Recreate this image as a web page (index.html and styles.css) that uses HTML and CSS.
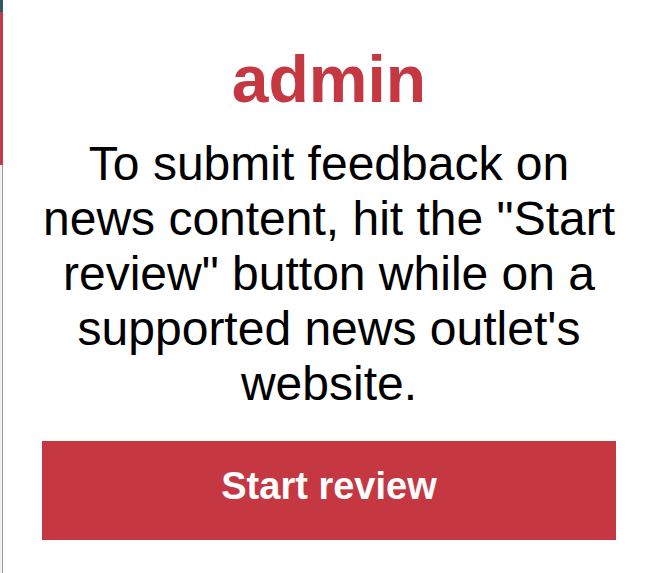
FILE: index.html
```html
<!DOCTYPE html>
<html lang="en">
<head>
<meta charset="utf-8">
<title>admin</title>
<link rel="stylesheet" href="styles.css">
</head>
<body>
<div class="edge">
  <div class="edge-top"></div>
  <div class="edge-red"></div>
  <div class="edge-rest"></div>
</div>
<main class="panel">
  <h1 class="title">admin</h1>
  <p class="message">To submit feedback on news content, hit the "Start review" button while on a supported news outlet's website.</p>
  <button class="start" type="button">Start review</button>
</main>
</body>
</html>
```

FILE: styles.css
```css
html, body {
  margin: 0;
  padding: 0;
  background: #ffffff;
}
body {
  display: flex;
  min-height: 573px;
  font-family: "Liberation Sans", Arial, Helvetica, sans-serif;
}
.edge {
  width: 3px;
  display: flex;
  flex-direction: column;
  flex: none;
}
.edge-top {
  height: 12px;
  background: #2f5868;
}
.edge-red {
  height: 153px;
  background: #c23a46;
}
.edge-rest {
  flex: 1;
  background: #f2f2f2;
  border-right: 1px solid #9a9a9a;
}
.panel {
  flex: 1;
  padding: 41px 37px 0 39px;
  display: flex;
  flex-direction: column;
  align-items: stretch;
}
.title {
  margin: 0;
  font-size: 66px;
  font-weight: bold;
  color: #c53741;
  text-align: center;
  line-height: normal;
}
.message {
  margin: 19px 0 0;
  font-size: 48px;
  line-height: normal;
  color: #000000;
  text-align: center;
}
.start {
  margin-top: 30px;
  height: 99px;
  padding: 24px 0 32px;
  border: 0;
  background: #c53741;
  color: #ffffff;
  font-family: "Liberation Sans", Arial, Helvetica, sans-serif;
  font-size: 38px;
  font-weight: bold;
  line-height: 43px;
  cursor: pointer;
}
```
